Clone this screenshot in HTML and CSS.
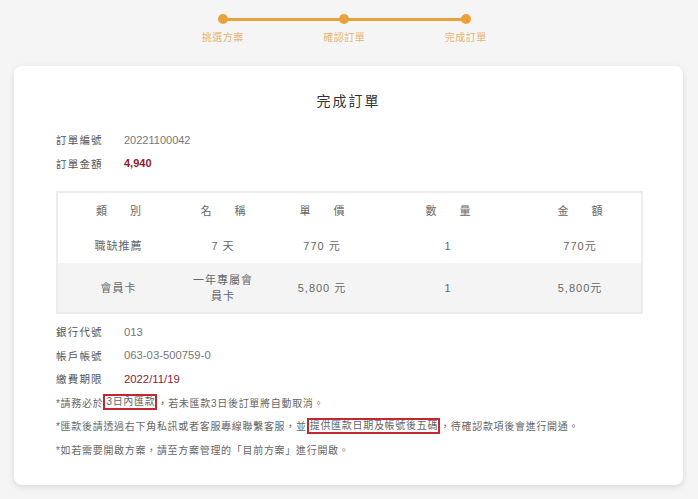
FILE: index.html
```html
<!DOCTYPE html>
<html lang="zh-Hant">

<head>
  <meta charset="UTF-8">
  <meta name="viewport" content="width=device-width, initial-scale=1.0">
  <title>完成訂單</title>
  <link rel="stylesheet" href="styles.css">
</head>

<body>
  <ol class="Steps">
    <li class="Steps-item"><span class="Steps-dot"></span>挑選方案</li>
    <li class="Steps-item"><span class="Steps-dot"></span>確認訂單</li>
    <li class="Steps-item"><span class="Steps-dot"></span>完成訂單</li>
  </ol>

  <main class="Card">
    <h1 class="Card-title">完成訂單</h1>

    <dl class="Info">
      <div class="Info-row">
        <dt>訂單編號</dt>
        <dd>20221100042</dd>
      </div>
      <div class="Info-row">
        <dt>訂單金額</dt>
        <dd class="Info-amount">4,940</dd>
      </div>
    </dl>

    <table class="Order">
      <colgroup>
        <col class="Order-c1">
        <col class="Order-c2">
        <col class="Order-c3">
        <col class="Order-c4">
        <col class="Order-c5">
      </colgroup>
      <thead>
        <tr>
          <th><span>類別</span></th>
          <th><span>名稱</span></th>
          <th><span>單價</span></th>
          <th><span>數量</span></th>
          <th><span>金額</span></th>
        </tr>
      </thead>
      <tbody>
        <tr>
          <td>職缺推薦</td>
          <td>7 天</td>
          <td>770 元</td>
          <td>1</td>
          <td>770元</td>
        </tr>
        <tr>
          <td>會員卡</td>
          <td>一年專屬會員卡</td>
          <td>5,800 元</td>
          <td>1</td>
          <td>5,800元</td>
        </tr>
      </tbody>
    </table>

    <dl class="Info Info--bank">
      <div class="Info-row">
        <dt>銀行代號</dt>
        <dd>013</dd>
      </div>
      <div class="Info-row">
        <dt>帳戶帳號</dt>
        <dd>063-03-500759-0</dd>
      </div>
      <div class="Info-row">
        <dt>繳費期限</dt>
        <dd class="Info-deadline">2022/11/19</dd>
      </div>
    </dl>

    <ul class="Notes">
      <li>*請務必於<mark>3日內匯款</mark>，若未匯款3日後訂單將自動取消。</li>
      <li>*匯款後請透過右下角私訊或者客服專線聯繫客服，並<mark>提供匯款日期及帳號後五碼</mark>，待確認款項後會進行開通。</li>
      <li>*如若需要開啟方案，請至方案管理的「目前方案」進行開啟。</li>
    </ul>
  </main>
</body>

</html>
```

FILE: styles.css
```css
body {
  background: #f5f5f5;
  color: #555;
  font-family: "Liberation Sans", "Noto Sans CJK TC", sans-serif;
  margin: 0;
}

* {
  box-sizing: border-box;
}

/* stepper */
.Steps {
  position: relative;
  display: grid;
  grid-template-columns: repeat(3, 121.5px);
  width: 364.5px;
  margin: 0 0 0 162px;
  padding: 14px 0 0;
  list-style: none;
}

.Steps::before {
  content: "";
  position: absolute;
  top: 17.5px;
  left: 60.75px;
  right: 60.75px;
  height: 3px;
  background: #e9a23b;
}

.Steps-item {
  display: flex;
  flex-direction: column;
  align-items: center;
  font-size: 10px;
  line-height: 14px;
  letter-spacing: .5px;
  color: #e4b46e;
}

.Steps-dot {
  position: relative;
  width: 10px;
  height: 10px;
  border-radius: 50%;
  background: #e9a23b;
  margin-bottom: 7px;
}

/* card */
.Card {
  display: block;
  margin: 21px 15px 14px 14px;
  padding: 24px 42px 24px;
  background: #fff;
  border-radius: 8px;
  box-shadow: 0 2px 6px rgba(0, 0, 0, .12);
}

.Card-title {
  margin: 0 0 16px;
  text-align: center;
  font-size: 14px;
  line-height: 22px;
  font-weight: normal;
  letter-spacing: 2px;
  color: #333;
}

.Info {
  margin: 0;
}

.Info-row {
  display: flex;
  align-items: center;
  height: 23.5px;
}

.Info dt {
  width: 68px;
  font-size: 10.5px;
  letter-spacing: 1.2px;
  color: #555;
}

.Info dd {
  margin: 0;
  font-size: 11px;
  color: #777;
}

.Info-amount {
  font-weight: bold;
  color: #8b1c2c !important;
}

.Info-deadline {
  color: #8b2232 !important;
}

.Info--bank {
  margin-top: 6px;
}

.Info--bank dd {
  font-size: 11.3px;
}

/* order table */
.Order {
  width: 100%;
  margin-top: 16px;
  border-collapse: collapse;
  border: 2px solid #ececec;
  table-layout: fixed;
  color: #666;
  font-size: 11px;
  letter-spacing: 1px;
}

.Order-c1 { width: 122px; }
.Order-c2 { width: 88px; }
.Order-c3 { width: 110px; }
.Order-c4 { width: 142px; }
.Order-c5 { width: 123px; }

.Order th,
.Order td {
  text-align: center;
  font-weight: normal;
  line-height: 16px;
}

.Order th {
  height: 36px;
  padding: 1px 0 0;
  white-space: nowrap;
}

.Order th span {
  letter-spacing: 23px;
  margin-right: -23px;
}

.Order td {
  height: 35px;
  padding: 0 12px;
}

.Order tbody tr:nth-child(2) td {
  height: 50px;
  background: #f4f4f4;
}

/* notes */
.Notes {
  margin: 0;
  padding: 0;
  list-style: none;
  font-size: 10px;
  letter-spacing: .7px;
  color: #666;
}

.Notes li {
  display: flex;
  align-items: center;
  height: 23.5px;
  white-space: nowrap;
}

mark {
  background: transparent;
  color: inherit;
  border: 2px solid #c4272e;
  padding: 0 0 0 1px;
  line-height: 12px;
}
```
